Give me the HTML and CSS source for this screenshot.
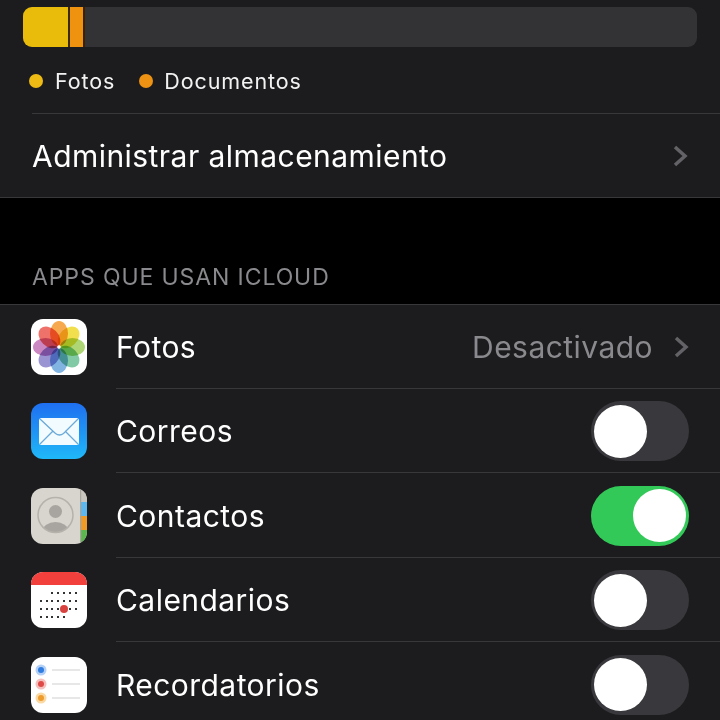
FILE: index.html
```html
<!DOCTYPE html>
<html lang="es">
<head>
    <meta charset="UTF-8">
    <meta name="viewport" content="width=device-width, initial-scale=1.0">
    <title>iCloud</title>
    <link rel="stylesheet" href="styles.css">
</head>
<body>
    <!-- Almacenamiento -->
    <section class="storage">
        <div class="bar">
            <div class="bar-fotos"></div>
            <div class="bar-docs"></div>
        </div>
        <div class="legend">
            <span class="dot dot-fotos"></span><span class="legend-label">Fotos</span>
            <span class="dot dot-docs"></span><span class="legend-label">Documentos</span>
        </div>
        <div class="manage">
            <span class="manage-label">Administrar almacenamiento</span>
            <svg class="chevron" viewBox="0 0 16 24"><path d="M3 3l10 9-10 9"/></svg>
        </div>
    </section>

    <h2 class="section-title">APPS QUE USAN ICLOUD</h2>

    <!-- Lista de apps -->
    <section class="apps">
        <div class="app-row">
            <svg class="app-icon" viewBox="0 0 56 56">
                <rect width="56" height="56" rx="12" fill="#fff"/>
                <ellipse class="petal" cx="28" cy="14.500" rx="9" ry="12.500" fill="#f5a03a"/>
                <ellipse class="petal" cx="28" cy="14.500" rx="9" ry="12.500" fill="#f0dc3a" transform="rotate(45 28 28)"/>
                <ellipse class="petal" cx="28" cy="14.500" rx="9" ry="12.500" fill="#a6d265" transform="rotate(90 28 28)"/>
                <ellipse class="petal" cx="28" cy="14.500" rx="9" ry="12.500" fill="#74c49c" transform="rotate(135 28 28)"/>
                <ellipse class="petal" cx="28" cy="14.500" rx="9" ry="12.500" fill="#74acdf" transform="rotate(180 28 28)"/>
                <ellipse class="petal" cx="28" cy="14.500" rx="9" ry="12.500" fill="#8f88ce" transform="rotate(225 28 28)"/>
                <ellipse class="petal" cx="28" cy="14.500" rx="9" ry="12.500" fill="#c67aba" transform="rotate(270 28 28)"/>
                <ellipse class="petal" cx="28" cy="14.500" rx="9" ry="12.500" fill="#ec625a" transform="rotate(315 28 28)"/>
                <circle cx="28" cy="28" r="1.800" fill="#fff"/>
            </svg>
            <span class="app-name">Fotos</span>
            <span class="app-value">Desactivado</span>
            <svg class="chevron" viewBox="0 0 16 24"><path d="M3 3l10 9-10 9"/></svg>
        </div>
        <div class="app-row">
            <svg class="app-icon" viewBox="0 0 56 56">
                <defs>
                    <linearGradient id="mail-bg" x1="0" y1="0" x2="0" y2="1">
                        <stop offset="0" stop-color="#1f6ff0"/>
                        <stop offset="1" stop-color="#1fb8f8"/>
                    </linearGradient>
                </defs>
                <rect width="56" height="56" rx="12" fill="url(#mail-bg)"/>
                <rect x="8" y="15" width="40" height="27" rx="2.500" fill="#f2fbff"/>
                <path d="M9 16l15.500 14.500q4 3 8 0L47 16M9 41l13-13M47 41L34 28" fill="none" stroke="#6aa9d8" stroke-width="1.300"/>
            </svg>
            <span class="app-name">Correos</span>
            <div class="switch"><div class="knob"></div></div>
        </div>
        <div class="app-row">
            <svg class="app-icon" viewBox="0 0 56 56">
                <defs>
                    <clipPath id="contact-clip"><rect width="56" height="56" rx="12"/></clipPath>
                    <clipPath id="contact-circle"><circle cx="24.500" cy="27" r="17.500"/></clipPath>
                </defs>
                <g clip-path="url(#contact-clip)">
                    <rect width="56" height="56" fill="#d8d5ce"/>
                    <rect x="50" y="0" width="6" height="14" fill="#c9c6bf"/>
                    <rect x="50" y="14" width="6" height="14" fill="#5cb8ef"/>
                    <rect x="50" y="28" width="6" height="14" fill="#f09a27"/>
                    <rect x="50" y="42" width="6" height="14" fill="#5cb84e"/>
                    <rect x="49" y="0" width="1.200" height="56" fill="#a9a69f"/>
                </g>
                <g clip-path="url(#contact-circle)" fill="#a8a5a0">
                    <circle cx="24.500" cy="23.500" r="6.500"/>
                    <ellipse cx="24.500" cy="43" rx="13" ry="9"/>
                </g>
                <circle cx="24.500" cy="27" r="17.500" fill="none" stroke="#b5b2ac" stroke-width="1.500"/>
            </svg>
            <span class="app-name">Contactos</span>
            <div class="switch switch-on"><div class="knob"></div></div>
        </div>
        <div class="app-row">
            <svg class="app-icon" viewBox="0 0 56 56">
                <defs>
                    <clipPath id="cal-clip"><rect width="56" height="56" rx="12"/></clipPath>
                </defs>
                <g clip-path="url(#cal-clip)">
                    <rect width="56" height="56" fill="#fff"/>
                    <rect width="56" height="13" fill="#f2413d"/>
                </g>
                <circle cx="33" cy="37" r="4" fill="#d9433f"/>
                <g fill="#333">
                    <rect x="20" y="20" width="2" height="2"/><rect x="26" y="20" width="2" height="2"/><rect x="32" y="20" width="2" height="2"/><rect x="38" y="20" width="2" height="2"/><rect x="44" y="20" width="2" height="2"/>
                    <rect x="9" y="28" width="2" height="2"/><rect x="15" y="28" width="2" height="2"/><rect x="20" y="28" width="2" height="2"/><rect x="26" y="28" width="2" height="2"/><rect x="32" y="28" width="2" height="2"/><rect x="38" y="28" width="2" height="2"/><rect x="44" y="28" width="2" height="2"/>
                    <rect x="9" y="36" width="2" height="2"/><rect x="15" y="36" width="2" height="2"/><rect x="20" y="36" width="2" height="2"/><rect x="26" y="36" width="2" height="2"/><rect x="38" y="36" width="2" height="2"/><rect x="44" y="36" width="2" height="2"/>
                    <rect x="9" y="44" width="2" height="2"/><rect x="15" y="44" width="2" height="2"/><rect x="20" y="44" width="2" height="2"/><rect x="26" y="44" width="2" height="2"/><rect x="32" y="44" width="2" height="2"/>
                </g>
            </svg>
            <span class="app-name">Calendarios</span>
            <div class="switch"><div class="knob"></div></div>
        </div>
        <div class="app-row">
            <svg class="app-icon" viewBox="0 0 56 56">
                <rect width="56" height="56" rx="12" fill="#fff"/>
                <circle cx="10" cy="13" r="5.500" fill="#b4d0f6"/><circle cx="10" cy="13" r="3" fill="#2f7de1"/>
                <circle cx="10" cy="27" r="5.500" fill="#f5c0be"/><circle cx="10" cy="27" r="3" fill="#df4a48"/>
                <circle cx="10" cy="41" r="5.500" fill="#fbd9a4"/><circle cx="10" cy="41" r="3" fill="#ee9c2c"/>
                <path d="M21 13h28M21 27h28M21 41h28" stroke="#cfcfd1" stroke-width="1"/>
            </svg>
            <span class="app-name">Recordatorios</span>
            <div class="switch"><div class="knob"></div></div>
        </div>
    </section>
</body>
</html>
```

FILE: styles.css
```css
/* Global */
html, body {
    height: 720px;
    overflow: hidden;
}

body {
    margin: 0;
    background-color: #000;
    color: #fff;
    font-family: 'Inter', 'Liberation Sans', sans-serif;
}

/* Almacenamiento */
.storage {
    background-color: #1c1c1e;
    height: 197px;
    border-bottom: 1px solid #38383a;
    overflow: hidden;
}

.bar {
    display: flex;
    height: 40px;
    margin: 7px 23px 0;
    background-color: #333335;
    border-radius: 9px;
    overflow: hidden;
}

.bar-fotos {
    width: 45px;
    background-color: #e9bb0a;
    border-right: 2px solid #3a2a08;
}

.bar-docs {
    width: 13px;
    background-color: #ee920f;
    border-right: 2px solid #3e1f08;
}

.legend {
    display: flex;
    align-items: center;
    height: 28px;
    margin-top: 20px;
    padding-left: 29px;
}

.dot {
    width: 14px;
    height: 14px;
    border-radius: 50%;
    margin-right: 12px;
}

.dot-fotos { background-color: #eebb14; }
.dot-docs {
    margin-left: 1px;
    margin-right: 11px;
    background-color: #ee9213;
}

.legend-label {
    font-size: 21.500px;
    letter-spacing: 0.9px;
    color: #f2f2f2;
    margin-right: 23px;
}

.manage {
    display: flex;
    align-items: center;
    justify-content: space-between;
    height: 84px;
    margin: 18px 0 0 32px;
    padding-right: 32px;
    border-top: 1px solid #38383a;
}

.manage-label {
    font-size: 30px;
    letter-spacing: 0.45px;
}

.chevron {
    width: 16px;
    height: 24px;
    fill: none;
    stroke: #636367;
    stroke-width: 3.500;
}

/* Apps */
.section-title {
    margin: 0;
    height: 105.600px;
    box-sizing: border-box;
    padding: 65px 0 0 32px;
    font-size: 23px;
    font-weight: 400;
    letter-spacing: 0.9px;
    line-height: 28px;
    color: #8a8a8e;
}

.apps {
    background-color: #1c1c1e;
    border-top: 1px solid #38383a;
}

.app-row {
    display: flex;
    align-items: center;
    height: 84.500px;
    padding: 0 31px;
    position: relative;
}

.app-row + .app-row::before {
    content: "";
    position: absolute;
    top: -1.200px;
    left: 116px;
    right: 0;
    height: 1px;
    background-color: #38383a;
}

.app-icon {
    width: 56px;
    height: 56px;
    margin-right: 29px;
    flex-shrink: 0;
}

.petal {
    mix-blend-mode: multiply;
    opacity: 0.9;
}

.app-name {
    flex: 1;
    font-size: 30px;
    letter-spacing: 0.45px;
}

.app-value {
    font-size: 30px;
    letter-spacing: 0.45px;
    color: #8a8a8e;
    margin-right: 20px;
}

.switch {
    display: flex;
    align-items: center;
    width: 98px;
    height: 60px;
    box-sizing: border-box;
    padding: 0 3px;
    background-color: #39393d;
    border-radius: 30px;
}

.switch-on {
    justify-content: flex-end;
    background-color: #33c959;
}

.knob {
    width: 53px;
    height: 53px;
    background-color: #fff;
    border-radius: 50%;
}
```
